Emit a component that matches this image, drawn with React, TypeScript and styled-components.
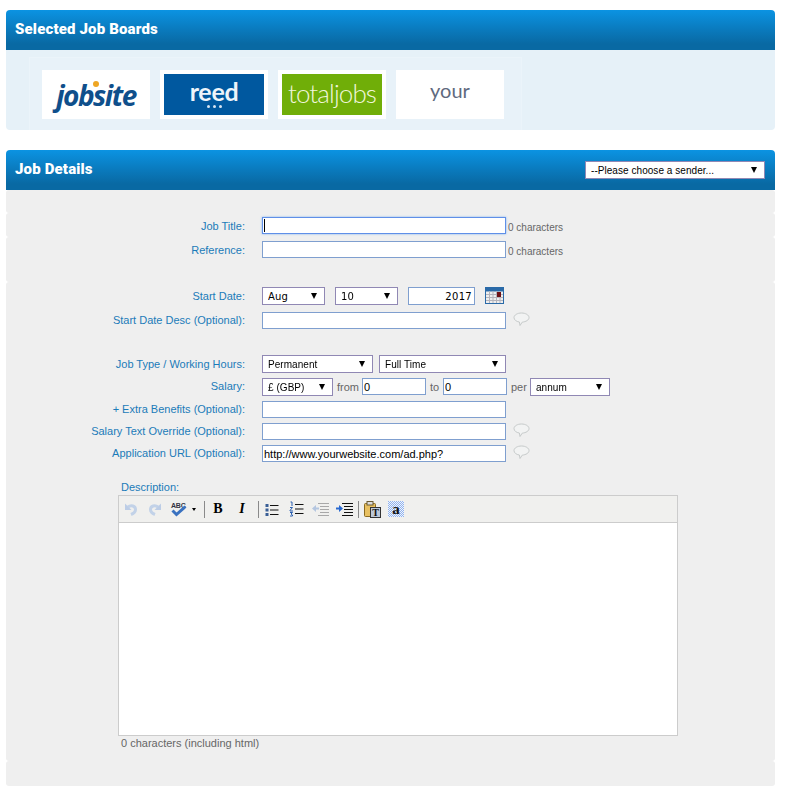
import React from "react";
import styled, { createGlobalStyle } from "styled-components";

const GlobalStyle = createGlobalStyle`
  html, body {
    margin: 0;
    padding: 0;
    background: #ffffff;
    font-family: "Liberation Sans", Arial, sans-serif;
  }
`;

function SpeechBubble() {
  return (
    <BubbleSvg viewBox="0 0 17 15">
      <path
        d="M8.5 1C4.4 1 1 3 1 5.6c0 2.200 2.300 4 5.400 4.400L7 13.500l2.300-3.400c3.500-.3 6.700-2 6.700-4.500C16 3 12.600 1 8.500 1z"
        fill="#f2f3f3"
        stroke="#c6caca"
      />
    </BubbleSvg>
  );
}

function CalendarIcon() {
  return (
    <CalendarSvg viewBox="0 0 19 17">
      <rect x="0.5" y="0.5" width="18" height="16" fill="#eeeeee" stroke="#2a6aa8" />
      <rect x="1" y="1" width="17" height="3.500" fill="#2a6aa8" />
      <path
        d="M4.500 4v12M8 4v12M11.500 4v12M15 4v12M1 7.500h17M1 10.500h17M1 13.500h17"
        stroke="#b4b4bc"
        fill="none"
      />
      <rect x="12" y="5" width="4" height="5" fill="#6d1014" />
    </CalendarSvg>
  );
}

function UndoIcon({ flip }: { flip?: boolean }) {
  return (
    <svg width="14" height="14" viewBox="0 0 14 14" style={flip ? { transform: "scaleX(-1)" } : undefined}>
      <path d="M4 5C7 2.500 11.500 4 11.500 7.500 11.500 10 9.500 11.500 7 12.500" fill="none" stroke="#c2d2e8" strokeWidth="3" />
      <path d="M1 1.500v6.500h6.500z" fill="#bccde6" />
    </svg>
  );
}

function SpellIcon() {
  return (
    <svg width="18" height="16" viewBox="0 0 18 16">
      <text x="1" y="6.500" fontFamily="Liberation Sans" fontSize="7" fontWeight="700" fill="#333344" letterSpacing="-0.2">
        ABC
      </text>
      <path d="M2.500 9.500L6.500 13.500 15.500 5.500" fill="none" stroke="#3a72c0" strokeWidth="3" />
    </svg>
  );
}

function BulletIcon() {
  return (
    <svg width="14" height="15" viewBox="0 0 14 15">
      <path d="M0.500 2h3v3h-3zM0.500 6.500h3v3h-3zM0.500 11h3v3h-3z" fill="#3a5f96" />
      <path d="M5 3.500h8.500M5 8h8.500M5 12.500h8.500" stroke="#111111" />
    </svg>
  );
}

function NumberIcon() {
  return (
    <svg width="15" height="16" viewBox="0 0 15 16">
      <path
        d="M1.500 1h1.500v4M1 6.500h2.500L1 9.500v.5h3M1 11.500h2.500L2 13l1.500 1v1H1"
        stroke="#2a5fb0"
        fill="none"
      />
      <path d="M6 3.500h8.500M6 8h8.500M6 12.500h8.500" stroke="#111111" />
    </svg>
  );
}

function IndentIcon({ dim, reverse }: { dim?: boolean; reverse?: boolean }) {
  const line = dim ? "#a8a8a8" : "#111111";
  const arrow = dim ? "#b4c6e0" : "#2a6ad0";
  return (
    <svg width="17" height="16" viewBox="0 0 17 16">
      <path d="M6 2.500h11M8 5.500h9M8 8.500h9M8 11.500h9M6 14.500h11" stroke={line} />
      <path d="M0 6.500h3V4l4 3.500L3 11V8.500H0z" fill={arrow} transform={reverse ? "matrix(-1 0 0 1 7 0)" : undefined} />
    </svg>
  );
}

function PasteIcon() {
  return (
    <svg width="17" height="17" viewBox="0 0 17 17">
      <rect x="0.500" y="2.500" width="11" height="13" rx="1" fill="#e8c060" stroke="#8a6a20" />
      <rect x="3" y="0.500" width="6" height="3.500" fill="#dddddd" stroke="#6a5a30" />
      <rect x="6.500" y="6.500" width="10" height="10" fill="#bcc8d8" stroke="#333333" />
      <TextGlyph x="11.500" y="15" fontSize="10" fontWeight="700" textAnchor="middle">
        T
      </TextGlyph>
    </svg>
  );
}

function WordIcon() {
  return (
    <svg width="16" height="16" viewBox="0 0 16 16">
      <defs>
        <pattern id="wordChecks" width="2" height="2" patternUnits="userSpaceOnUse">
          <rect width="2" height="2" fill="#f0f4fc" />
          <rect width="1" height="1" fill="#8fb2ee" />
          <rect x="1" y="1" width="1" height="1" fill="#8fb2ee" />
        </pattern>
      </defs>
      <rect width="16" height="16" fill="url(#wordChecks)" />
      <TextGlyph x="8" y="12.500" fontSize="15" fontWeight="700" textAnchor="middle">
        a
      </TextGlyph>
    </svg>
  );
}

function Logos() {
  return (
    <LogoStrip>
      <LogoCard>
        <JobsiteMark>
          jobsite
          <JobsiteDot />
        </JobsiteMark>
      </LogoCard>
      <LogoCard>
        <ReedTile>
          <ReedMark>reed</ReedMark>
          <ReedDots>
            <i />
            <i />
            <i />
          </ReedDots>
        </ReedTile>
      </LogoCard>
      <LogoCard>
        <TotalTile>totaljobs</TotalTile>
      </LogoCard>
      <LogoCard>
        <YourMark>your</YourMark>
      </LogoCard>
    </LogoStrip>
  );
}

function DropDown({ width, value, mono }: { width: number; value: string; mono?: boolean }) {
  return (
    <SelectWrap $width={width}>
      <Select $mono={mono} defaultValue={value}>
        <option>{value}</option>
      </Select>
    </SelectWrap>
  );
}

function App() {
  return (
    <Page>
      <GlobalStyle />
      <Panel>
        <PanelHeader>
          <PanelTitle>Selected Job Boards</PanelTitle>
        </PanelHeader>
        <BoardsBody>
          <Logos />
        </BoardsBody>
      </Panel>

      <Panel>
        <PanelHeader>
          <PanelTitle>Job Details</PanelTitle>
          <DropDown width={180} value="--Please choose a sender..." />
        </PanelHeader>

        <Section $height={23} />
        <Section $height={24}>
          <Row>
            <Label>Job Title:</Label>
            <FocusField>
              <TextInput $width={244} autoFocus />
            </FocusField>
            <Hint>0 characters</Hint>
          </Row>
        </Section>
        <Section $height={45}>
          <Row>
            <Label>Reference:</Label>
            <TextInput $width={244} />
            <Hint>0 characters</Hint>
          </Row>
        </Section>
        <Section $height={479} $top={5}>
          <Row $bottom={7} $gap={10}>
            <Label $flush>Start Date:</Label>
            <DropDown width={63} value="Aug" mono />
            <DropDown width={63} value="10" mono />
            <YearInput defaultValue="2017" />
            <CalendarIcon />
          </Row>
          <Row $bottom={26}>
            <Label $raised>Start Date Desc (Optional):</Label>
            <TextInput $width={244} />
            <SpeechBubble />
          </Row>
          <Row $bottom={5}>
            <Label>Job Type / Working Hours:</Label>
            <DropDown width={111} value="Permanent" />
            <DropDown width={127} value="Full Time" />
          </Row>
          <Row $bottom={5}>
            <Label $raised>Salary:</Label>
            <DropDown width={71} value="£ (GBP)" />
            <Word $width={22}>from</Word>
            <TextInput $width={64} defaultValue="0" />
            <Word $width={10}>to</Word>
            <TextInput $width={64} defaultValue="0" />
            <Word $width={16}>per</Word>
            <DropDown width={80} value="annum" />
          </Row>
          <Row $bottom={5}>
            <Label $raised>+ Extra Benefits (Optional):</Label>
            <TextInput $width={244} />
          </Row>
          <Row $bottom={5}>
            <Label $raised>Salary Text Override (Optional):</Label>
            <TextInput $width={244} />
            <SpeechBubble />
          </Row>
          <Row $bottom={19}>
            <Label $raised>Application URL (Optional):</Label>
            <TextInput $width={244} defaultValue="http://www.yourwebsite.com/ad.php?" />
            <SpeechBubble />
          </Row>

          <EditorBlock>
            <EditorLabel>Description:</EditorLabel>
            <Editor>
              <Toolbar>
                <ToolButton><UndoIcon /></ToolButton>
                <ToolButton><UndoIcon flip /></ToolButton>
                <SplitButton>
                  <SpellIcon />
                  <Caret />
                </SplitButton>
                <Separator />
                <ToolButton><BoldGlyph>B</BoldGlyph></ToolButton>
                <ToolButton><ItalicGlyph>I</ItalicGlyph></ToolButton>
                <Separator />
                <ToolButton><BulletIcon /></ToolButton>
                <ToolButton><NumberIcon /></ToolButton>
                <ToolButton><IndentIcon dim reverse /></ToolButton>
                <ToolButton><IndentIcon /></ToolButton>
                <Separator $tight />
                <ToolButton><PasteIcon /></ToolButton>
                <ToolButton><WordIcon /></ToolButton>
              </Toolbar>
              <EditorArea />
            </Editor>
            <EditorFoot>0 characters (including html)</EditorFoot>
          </EditorBlock>
        </Section>
        <Section $height={25} />
      </Panel>
    </Page>
  );
}

const Page = styled.div`
  width: 775px;
  height: 789px;
  padding: 10px 0 0 6px;
  box-sizing: border-box;
  overflow: hidden;
  display: flex;
  flex-direction: column;
  gap: 20px;
`;

const Panel = styled.section`
  display: flex;
  flex-direction: column;
`;

const PanelHeader = styled.header`
  height: 40px;
  padding: 0 10px 0 9px;
  display: flex;
  align-items: center;
  justify-content: space-between;
  border-radius: 4px 4px 0 0;
  background: linear-gradient(to bottom, #0b93e2 0%, #0a7cc0 45%, #0969a3 85%, #0969a3 100%);
`;

const PanelTitle = styled.h2`
  margin: 0;
  padding-bottom: 2px;
  font-family: "Roboto", sans-serif;
  font-size: 15px;
  font-weight: 900;
  letter-spacing: 0.15px;
  color: #ffffff;
`;

const BoardsBody = styled.div`
  height: 80px;
  padding: 7px 0 0 23px;
  box-sizing: border-box;
  background: #e6f1f8;
  border-radius: 0 0 4px 4px;
`;

const LogoStrip = styled.div`
  width: 493px;
  height: 73px;
  padding: 12px 0 0 12px;
  box-sizing: border-box;
  display: flex;
  gap: 10px;
  background: #e8f2f9;
  border: solid #ebf4fa;
  border-width: 1px 1px 0;
`;

const LogoCard = styled.div`
  width: 108px;
  height: 49px;
  padding: 4px;
  box-sizing: border-box;
  display: flex;
  align-items: center;
  justify-content: center;
  background: #ffffff;
  overflow: hidden;
`;

const JobsiteMark = styled.span`
  position: relative;
  font-family: "Open Sans", sans-serif;
  font-size: 28px;
  font-weight: 700;
  font-style: italic;
  letter-spacing: -1.5px;
  color: #0f4f8b;
  line-height: 1;
`;

const JobsiteDot = styled.b`
  position: absolute;
  left: 37px;
  top: 0;
  width: 6px;
  height: 6px;
  border-radius: 50%;
  background: #eea624;
`;

const ReedTile = styled.div`
  width: 100%;
  height: 41px;
  display: flex;
  flex-direction: column;
  align-items: center;
  justify-content: center;
  background: #00589f;
`;

const ReedMark = styled.span`
  margin-top: -2px;
  font-family: "Lato", sans-serif;
  font-size: 25px;
  font-weight: 700;
  line-height: 22px;
  letter-spacing: -0.3px;
  color: #eef4fa;
`;

const ReedDots = styled.span`
  display: flex;
  gap: 3px;
  margin-top: 3px;

  & i {
    width: 3px;
    height: 3px;
    border-radius: 50%;
    background: #d6e4f2;
  }
`;

const TotalTile = styled.div`
  width: 100%;
  height: 41px;
  padding-bottom: 3px;
  box-sizing: border-box;
  display: flex;
  align-items: center;
  justify-content: center;
  background: #70ae08;
  font-family: "Lato", sans-serif;
  font-size: 26px;
  font-weight: 300;
  letter-spacing: -0.9px;
  color: #f0f6dc;
`;

const YourMark = styled.span`
  font-family: "Lato", sans-serif;
  font-size: 20px;
  margin-top: -10px;
  color: #5f6a7e;
`;

const Section = styled.div<{ $height: number; $top?: number }>`
  height: ${(p) => p.$height}px;
  padding-top: ${(p) => p.$top ?? 4}px;
  box-sizing: border-box;
  background: #efefef;
  border-radius: 3px;
`;

const Row = styled.div<{ $bottom?: number; $gap?: number }>`
  display: flex;
  align-items: flex-start;
  gap: ${(p) => p.$gap ?? 6}px;
  margin-bottom: ${(p) => p.$bottom ?? 0}px;
`;

const Label = styled.label<{ $flush?: boolean; $raised?: boolean }>`
  width: 239px;
  height: 17px;
  margin-right: ${(p) => (p.$flush ? 7 : 11)}px;
  font-size: 11px;
  line-height: ${(p) => (p.$raised ? 16 : 18)}px;
  text-align: right;
  white-space: nowrap;
  color: #1b7bb9;
`;

const FocusField = styled.span`
  position: relative;
  display: block;
  height: 17px;

  &::after {
    content: "";
    position: absolute;
    left: 2px;
    top: 2px;
    width: 1px;
    height: 13px;
    background: #000000;
  }
`;

const TextInput = styled.input<{ $width: number }>`
  display: block;
  width: ${(p) => p.$width}px;
  height: 17px;
  padding: 0 1px;
  box-sizing: border-box;
  border: 1px solid #7f9fcf;
  border-radius: 0;
  outline: none;
  background: #ffffff;
  font-family: "Liberation Sans", sans-serif;
  font-size: 11px;
  color: #000000;
  caret-color: transparent;

  &:focus {
    border-color: #5f8fe8;
    box-shadow: 0 0 2px #7fb0f0;
  }
`;

const YearInput = styled.input`
  width: 67px;
  height: 18px;
  padding: 0 2px;
  box-sizing: border-box;
  border: 1px solid #7f9fcf;
  background: #ffffff;
  font-family: "DejaVu Sans", sans-serif;
  font-size: 10px;
  text-align: right;
  letter-spacing: 0.3px;
`;

const Hint = styled.span`
  margin-left: -4px;
  padding-top: 4px;
  font-size: 10px;
  line-height: 13px;
  color: #666666;
`;

const Word = styled.span<{ $width: number }>`
  width: ${(p) => p.$width}px;
  margin: 0 -3px 0 -2px;
  font-size: 11px;
  line-height: 18px;
  white-space: nowrap;
  color: #666666;
`;

const BubbleSvg = styled.svg`
  width: 17px;
  height: 15px;
  margin-left: 1px;
`;

const CalendarSvg = styled.svg`
  width: 19px;
  height: 17px;
  flex: none;
`;

const SelectWrap = styled.div<{ $width: number }>`
  position: relative;
  width: ${(p) => p.$width}px;
  height: 18px;
  flex: none;

  &::after {
    content: "";
    position: absolute;
    right: 8px;
    top: 6px;
    border-style: solid;
    border-width: 6px 3.5px 0;
    border-color: #000000 transparent transparent;
    pointer-events: none;
  }
`;

const Select = styled.select<{ $mono?: boolean }>`
  appearance: none;
  display: block;
  width: 100%;
  height: 100%;
  margin: 0;
  padding: 0 0 0 5px;
  box-sizing: border-box;
  border: 1px solid #9088b4;
  border-radius: 0;
  background: #ffffff;
  outline: none;
  font-family: ${(p) => (p.$mono ? '"DejaVu Sans"' : '"Liberation Sans"')}, sans-serif;
  font-size: 10px;
  letter-spacing: ${(p) => (p.$mono ? "0.2px" : "0.05px")};
  color: #000000;
`;

const EditorBlock = styled.div`
  margin-left: 112px;
  width: 560px;
`;

const EditorLabel = styled.div`
  height: 14px;
  padding-left: 3px;
  font-size: 11px;
  line-height: 12px;
  color: #1b7bb9;
`;

const Editor = styled.div`
  height: 241px;
  box-sizing: border-box;
  border: 1px solid #cccccc;
  display: flex;
  flex-direction: column;
`;

const Toolbar = styled.div`
  height: 27px;
  flex: none;
  display: flex;
  align-items: center;
  background: #f0f0ee;
  border-bottom: 1px solid #cccccc;
  box-sizing: border-box;
`;

const ToolButton = styled.span`
  width: 24px;
  height: 20px;
  display: flex;
  align-items: center;
  justify-content: center;
`;

const SplitButton = styled.span`
  width: 33px;
  box-sizing: border-box;
  display: flex;
  align-items: center;
  gap: 4px;
  padding-left: 3px;
`;

const Caret = styled.i`
  border-style: solid;
  border-width: 3px 2.5px 0;
  border-color: #000000 transparent transparent;
`;

const Separator = styled.span<{ $tight?: boolean }>`
  width: 1px;
  height: 17px;
  margin: ${(p) => (p.$tight ? "0 1px 0 2px" : "0 1px 0 4px")};
  background: #8a8a8a;
`;

const BoldGlyph = styled.span`
  font-family: "Liberation Serif", serif;
  font-size: 14px;
  font-weight: 700;
  color: #000000;
`;

const ItalicGlyph = styled.span`
  font-family: "Liberation Serif", serif;
  font-size: 14px;
  font-weight: 700;
  font-style: italic;
  color: #000000;
`;

const TextGlyph = styled.text`
  font-family: "Liberation Serif", serif;
  fill: #111111;
`;

const EditorArea = styled.div`
  flex: 1;
  background: #ffffff;
`;

const EditorFoot = styled.div`
  padding: 0 0 0 3px;
  font-size: 11px;
  line-height: 14px;
  color: #666666;
`;

export default App;
